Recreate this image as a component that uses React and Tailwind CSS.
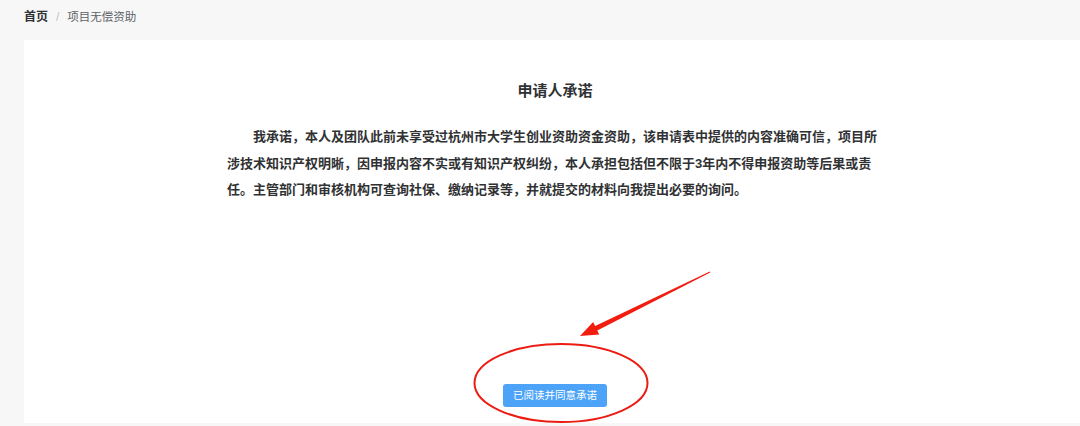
import React from "react";

const font = { fontFamily: '"Liberation Sans", "Noto Sans CJK SC", sans-serif' };

const Breadcrumb = () => (
    <nav className="flex h-[40px] items-start pl-[24px] pt-[9px] text-[12px] leading-[16px]">
        <span className="font-bold text-[#303133]">首页</span>
        <span className="mx-[8px] text-[#c0c4cc]">/</span>
        <span className="text-[11.5px] text-[#606266]">项目无偿资助</span>
    </nav>
);

const Annotation = () => (
    <svg
        className="pointer-events-none absolute left-0 top-0"
        width="1080"
        height="426"
        viewBox="0 0 1080 426"
    >
        {/* ellipse around button */}
        <ellipse
            cx="561"
            cy="383"
            rx="86.5"
            ry="39"
            fill="none"
            stroke="#ec1c12"
            strokeWidth="2"
        />
        {/* arrow */}
        <polygon
            points="709.8,271.5 595.1,325.9 593.1,321.9 580,336 599.2,334.5 597.3,330.4 710.2,272.5"
            fill="#f11e10"
        />
    </svg>
);

export default function App() {
    return (
        <div className="relative h-[426px] w-[1080px] overflow-hidden bg-[#f7f7f7]" style={font}>
            <Breadcrumb />

            {/* Card */}
            <section className="ml-[24px] flex h-[383px] flex-col items-center bg-white pb-[16px] pl-[6px]">
                <h2 className="mt-[41px] text-[15px] font-bold leading-[20px] text-[#303133]">
                    申请人承诺
                </h2>
                <p className="mt-[23px] w-[656px] indent-[26px] text-[13px] font-bold leading-[26.5px] text-[#303133]">
                    我承诺，本人及团队此前未享受过杭州市大学生创业资助资金资助，该申请表中提供的内容准确可信，项目所涉技术知识产权明晰，因申报内容不实或有知识产权纠纷，本人承担包括但不限于3年内不得申报资助等后果或责任。主管部门和审核机构可查询社保、缴纳记录等，并就提交的材料向我提出必要的询问。
                </p>

                <button className="mt-auto h-[23px] w-[104px] rounded-[3px] bg-[#4ca3f7] text-[10.5px] text-white">
                    已阅读并同意承诺
                </button>
            </section>

            <Annotation />
        </div>
    );
}
